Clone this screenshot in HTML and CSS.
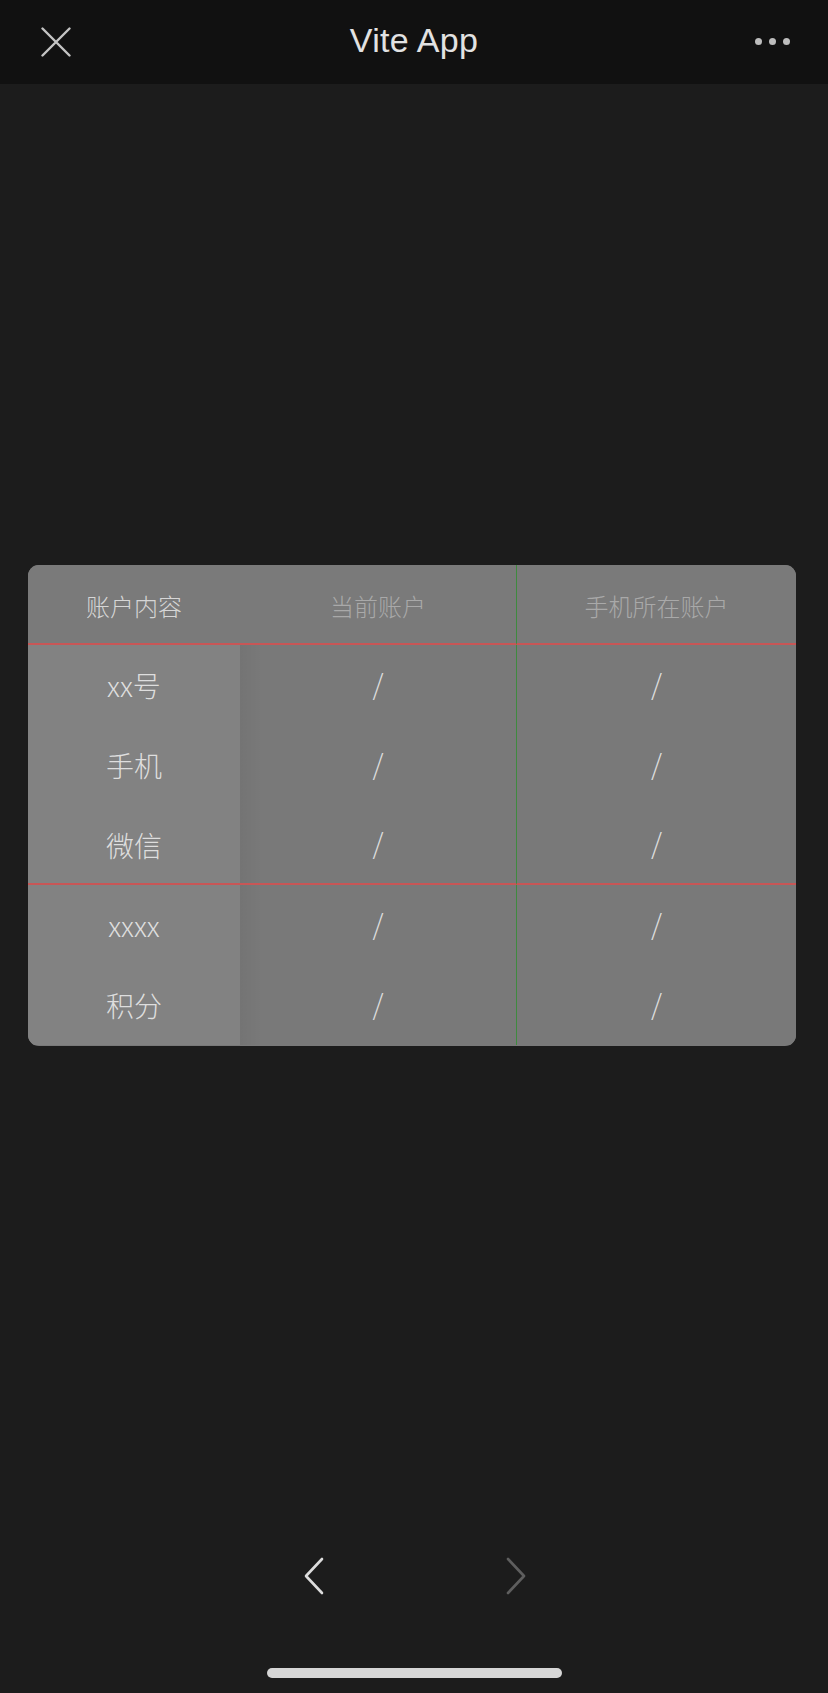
FILE: index.html
```html
<!DOCTYPE html>
<html lang="zh-CN">
<head>
<meta charset="utf-8">
<title>Vite App</title>
<link rel="stylesheet" href="styles.css">
</head>
<body>
<div class="page">
  <header class="topbar">
    <button class="icon-btn close-btn" aria-label="关闭">
      <svg width="30" height="30" viewBox="0 0 30 30"><path d="M1.5 1.5 L28.5 28.5 M28.5 1.5 L1.5 28.5" stroke="#c4c4c4" stroke-width="2.4" stroke-linecap="round" fill="none"/></svg>
    </button>
    <h1 class="title">Vite App</h1>
    <button class="icon-btn more-btn" aria-label="更多">
      <span class="dot"></span><span class="dot"></span><span class="dot"></span>
    </button>
  </header>

  <main class="content">
    <div class="card">
      <div class="cell head head-first">账户内容</div>
      <div class="cell head dim">当前账户</div>
      <div class="cell head dim col3">手机所在账户</div>

      <div class="cell first">xx号</div>
      <div class="cell val">/</div>
      <div class="cell val col3">/</div>

      <div class="cell first">手机</div>
      <div class="cell val">/</div>
      <div class="cell val col3">/</div>

      <div class="cell first sep">微信</div>
      <div class="cell val sep">/</div>
      <div class="cell val col3 sep">/</div>

      <div class="cell first">xxxx</div>
      <div class="cell val">/</div>
      <div class="cell val col3">/</div>

      <div class="cell first">积分</div>
      <div class="cell val">/</div>
      <div class="cell val col3">/</div>
    </div>
  </main>

  <footer class="bottom">
    <nav class="nav-row">
      <svg class="chev" width="22" height="38" viewBox="0 0 22 38"><path d="M19 2 L3 19 L19 36" stroke="#dcdcdc" stroke-width="2.6" stroke-linecap="round" stroke-linejoin="round" fill="none"/></svg>
      <svg class="chev" width="22" height="38" viewBox="0 0 22 38"><path d="M3 2 L19 19 L3 36" stroke="#5e5e5e" stroke-width="2.6" stroke-linecap="round" stroke-linejoin="round" fill="none"/></svg>
    </nav>
    <div class="home-area"><div class="home-bar"></div></div>
  </footer>
</div>
</body>
</html>
```

FILE: styles.css
```css
* { box-sizing: border-box; }

html, body {
  margin: 0;
  padding: 0;
  background: #1c1c1c;
}

body {
  font-family: "Noto Sans CJK SC", "Noto Sans", sans-serif;
}

.page {
  width: 828px;
  height: 1693px;
  display: flex;
  flex-direction: column;
  overflow: hidden;
}

.topbar {
  height: 84px;
  flex: none;
  background: #111111;
  display: flex;
  align-items: center;
  justify-content: space-between;
  position: relative;
  padding: 0 38px 0 41px;
}

.icon-btn {
  background: none;
  border: 0;
  padding: 0;
  display: flex;
  align-items: center;
}

.title {
  margin: 0;
  position: absolute;
  left: 0;
  right: 0;
  text-align: center;
  top: 20px;
  font-family: "Liberation Sans", Arial, sans-serif;
  font-weight: 400;
  font-size: 34px;
  line-height: 40px;
  color: #e2e2e2;
  letter-spacing: 0.3px;
  pointer-events: none;
}

.more-btn {
  gap: 7px;
  margin-top: -1px;
}

.dot {
  width: 7px;
  height: 7px;
  border-radius: 50%;
  background: #bdbdbd;
}

.content {
  flex: 1;
  padding: 481px 32px 0 28px;
}

.card {
  display: grid;
  grid-template-columns: 212px 276px 280px;
  grid-template-rows: 80px repeat(5, 80px);
  height: 481px;
  border-radius: 11px;
  overflow: hidden;
  background: #797979;
}

.cell {
  display: flex;
  align-items: center;
  justify-content: center;
  font-size: 28px;
  color: #dedede;
  background: #797979;
  font-weight: 300;
}

.cell.first {
  background: #828282;
}

.cell.val {
  padding-bottom: 4px;
}

.cell.val:not(.col3) {
  background: linear-gradient(to right, rgba(0, 0, 0, 0.045), rgba(0, 0, 0, 0) 22px), #797979;
}

.cell.head {
  font-size: 24px;
  background: #7a7a7a;
  border-bottom: 2px solid #c85656;
  padding-top: 2px;
  padding-bottom: 0;
}

.cell.head-first {
  color: #d6d6d6;
}

.cell.dim {
  color: #a9a9a9;
}

.cell.col3 {
  border-left: 1px solid #3f8a3f;
}

.cell.sep {
  border-bottom: 2px solid #c85656;
}

.cell.first.sep {
  padding-top: 2px;
}

.bottom {
  flex: none;
  height: 152px;
  display: flex;
  flex-direction: column;
}

.nav-row {
  height: 70px;
  display: flex;
  align-items: center;
  justify-content: center;
  gap: 180px;
  padding-left: 1px;
}

.home-area {
  padding-top: 57px;
  display: flex;
  justify-content: center;
}

.home-bar {
  width: 295px;
  height: 10px;
  border-radius: 5px;
  background: #d6d6d6;
  margin-left: 1px;
}
```
